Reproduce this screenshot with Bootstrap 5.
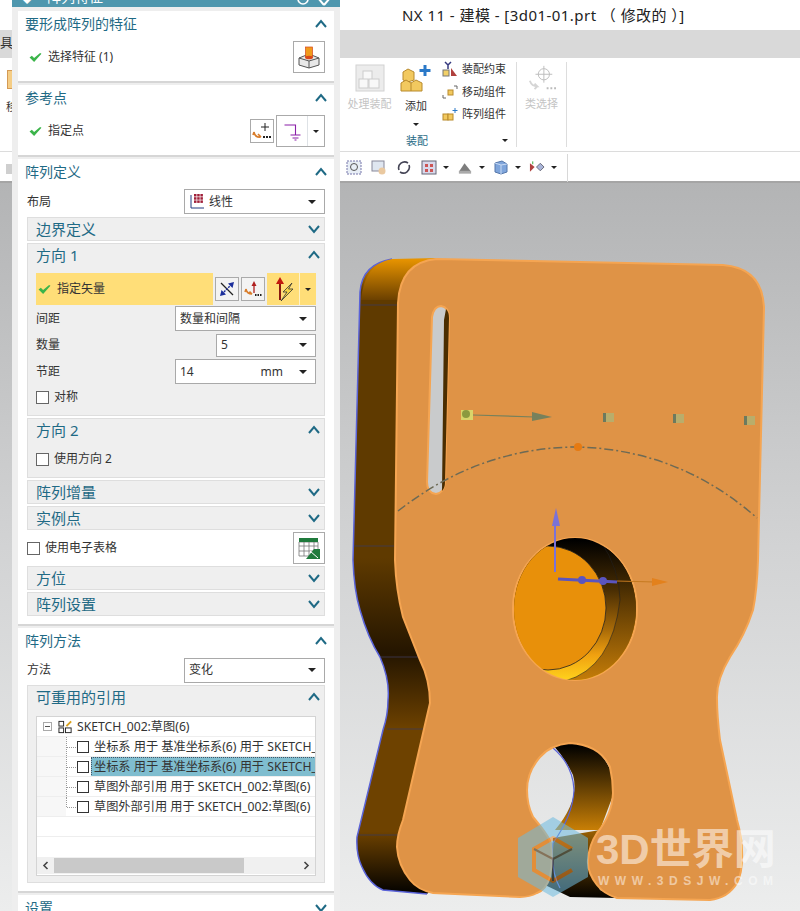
<!DOCTYPE html>
<html lang="zh">
<head>
  <meta charset="UTF-8" />
  <title>NX 11 - 建模</title>
  <link href="https://cdn.jsdelivr.net/npm/bootstrap@5.3.3/dist/css/bootstrap.min.css" rel="stylesheet">
  <style>
    html, body { height: 911px; overflow: hidden; }
    body { font-family: "Noto Sans", "Noto Sans CJK SC", sans-serif; font-size: 12px; color: #333; background: #fff; }

    /* application behind the dialog */
    .app-wrap { width: 800px; height: 911px; }
    .title-row { height: 30px; padding-left: 402px; font-size: 15px; letter-spacing: .45px; color: #222; line-height: 30px; white-space: nowrap; }
    .tab-row { height: 28px; background: #d9d9d9; }
    .ribbon-row { height: 94px; padding-left: 343px; border-bottom: 1px solid #dcdcdc; font-size: 11px; line-height: 16px; }
    .tool-row { height: 31px; padding: 2px 0 0 346px; background: #fff; border-bottom: 2px solid #a5a5a5; }
    .tool-row svg { flex: none; margin-right: 9px; }
    .tool-row svg.tb-drop { margin-right: 6px; }
    .tool-row .drop-mini { margin-right: 8px; }
    .tb-sep { width: 1px; height: 28px; background: #d8d8d8; margin-left: 2px; }
    .model-area { height: 728px; background: linear-gradient(#b3b4b5, #d2d3d4 50%, #eceded); }
    .model-area svg { display: block; }
    .rb-big { width: 53px; text-align: center; padding-top: 6px; }
    .rb-big svg { display: block; margin: 0 auto; }
    .rb-add { width: 40px; }
    .rb-off { color: #c4c4c4; }
    .rb-pick { width: 49px; }
    .rb-sep { width: 1px; background: #ddd; height: 85px; margin: 4px 0 0; flex: none; }
    .rb-rows { width: 70px; margin-left: 6px; margin-right: 4px; }
    .rb-line { height: 22.5px; line-height: 22px; white-space: nowrap; gap: 4px; }
    .rb-foot { margin-top: 7px; }
    .rb-cap { color: #1f6a85; margin-left: -36px; }
    .drop-mini { width: 0; height: 0; border-left: 3px solid transparent; border-right: 3px solid transparent; border-top: 3px solid #222; display: inline-block; }
    .stray-glyph { position: absolute; left: 0; top: 33px; font-size: 13px; line-height: 18px; }
    .stray-icon { position: absolute; left: 7px; top: 70px; width: 7px; height: 19px; background: #f5cd85; border: 1px solid #d49a55; }
    .stray-text { position: absolute; left: 6px; top: 99px; font-size: 11px; line-height: 16px; }
    .stray-tool { position: absolute; left: 6px; top: 164px; width: 8px; height: 10px; background: #cfcfcf; }

    /* floating dialog */
    .nx-dialog { position: absolute; left: 12px; top: 0; width: 328px; height: 911px; background: #eeeeee; overflow: hidden; }
    .nx-head { height: 7px; background: #4f97ae; margin-bottom: 4px; overflow: hidden; color: #fff; padding: 0 8px; }
    .nx-head-txt { font-size: 14px; line-height: 16px; margin-top: -11px; gap: 13px; }
    .nx-block { width: 316px; margin-left: 6px; background: #fff; border-bottom: 2px solid #d6d6d6; margin-bottom: 2px; }
    .nx-block-1 { height: 72px; }
    .nx-block-3 { height: 467px; }
    .nx-block-4 { height: 265px; }
    .nx-title { height: 27px; padding: 0 7px 2px; color: #1f6a85; font-size: 14px; line-height: 25px; }
    .nx-row { padding: 0 9px; }
    .nx-row-top { padding-top: 3px; }
    .tick-row { padding-left: 2px; gap: 6px; }
    .chk-row { gap: 5px; }
    .nx-sub { width: 298px; margin-left: 9px; background: #efefef; border: 1px solid #dedede; margin-bottom: 2px; }
    .nx-subhead { height: 22px; padding: 0 4px 0 8px; color: #1f6a85; font-size: 15px; line-height: 22px; }
    .nx-subhead-tall { height: 24px; padding-bottom: 2px; }
    .nx-label { font-size: 12px; color: #333; }
    .nx-field { height: 25px; background: #fff; border: 1px solid #a9a9a9; padding: 0 8px 0 4px; font-size: 12px; color: #333; }
    .nx-caret { width: 0; height: 0; border-left: 4px solid transparent; border-right: 4px solid transparent; border-top: 4px solid #222; flex: none; }
    .nx-caret-sm { border-left-width: 3px; border-right-width: 3px; border-top-width: 3px; }
    .nx-iconbtn { background: #fff; border: 1px solid #aaa; flex: none; }
    .nx-check { width: 13px; height: 13px; border: 1px solid #666; background: #fff; flex: none; }
    .vec-row { height: 32px; margin: 5px 8px 0; }
    .vec-yellow { background: #ffde78; height: 32px; }
    .vec-left { width: 177px; padding-left: 2px; gap: 6px; }
    .vec-right { width: 49px; margin-left: 2px; }
    .vec-mini { width: 24px; height: 24px; background: #f3f3f3; border: 1px solid #aaa; margin-left: 2px; flex: none; }
    .vec-split { width: 1px; height: 32px; background: #fff2c8; }
    .nx-tree { width: 280px; height: 160px; margin: 6px 0 0 8px; background: #fff; border: 1px solid #d4d4d4; overflow: hidden; }
    .tree-line { height: 20px; line-height: 20px; font-size: 12.2px; white-space: nowrap; overflow: hidden; border-bottom: 1px solid #eee; color: #333; }
    .tree-line .nx-check { width: 12px; height: 12px; border-color: #333; margin-left: 1px; }
    .tree-expander { margin-left: 6px; flex: none; }
    .tree-nodeicon { margin-left: 6px; flex: none; }
    .tree-gutter { width: 29px; background: #f7f7f7; flex: none; align-self: stretch; }
    .tree-conn { width: 10px; flex: none; align-self: stretch; border-left: 1px dotted #999; position: relative; }
    .tree-conn::after { content: ""; position: absolute; left: 0; top: 10px; width: 100%; border-top: 1px dotted #999; }
    .tree-conn-end { align-self: flex-start; height: 10px; }
    .tree-on { background: #7fbdcf; flex: 1; margin-left: 2px; padding-left: 3px; outline: 1px dotted #456; outline-offset: -1px; }
    .tree-txt { padding-left: 5px; flex: 1; overflow: hidden; }
    .tree-spacer { height: 20px; }
    .tree-bar { height: 17px; background: #f0f0f0; }
    .tree-thumb { width: 190px; height: 15px; background: #c9c9c9; }
    .tree-arrow { width: 17px; flex: none; }
  </style>
</head>
<body>

<svg width="0" height="0" class="position-absolute">
  <symbol id="chev-up" viewBox="0 0 12 10"><path d="M1 8 L6 2 L11 8" fill="none" stroke="#1f6a85" stroke-width="2"/></symbol>
  <symbol id="chev-dn" viewBox="0 0 12 10"><path d="M1 2 L6 8 L11 2" fill="none" stroke="#1f6a85" stroke-width="2"/></symbol>
  <symbol id="tick" viewBox="0 0 14 12"><path d="M0.5 6 L3 4 L5.5 6.5 L12 1 L13.5 2 L5.5 11 Z" fill="#3bb44a"/></symbol>
</svg>

<div class="app-wrap">
  <div class="title-row">NX 11 - 建模 - [3d01-01.prt （ 修改的 ）]</div>
  <div class="tab-row"></div>

  <div class="ribbon-row d-flex">
    <div class="rb-big rb-off">
      <svg width="30" height="28" viewBox="0 0 30 28"><rect x="1" y="1" width="28" height="26" fill="#ececec" stroke="#d2d2d2"/><rect x="8" y="7" width="9" height="9" fill="#f8f8f8" stroke="#ccc"/><rect x="4" y="15" width="9" height="9" fill="#f8f8f8" stroke="#ccc"/><rect x="14" y="15" width="10" height="9" fill="#f8f8f8" stroke="#ccc"/></svg>
      <div class="mt-1">处理装配</div>
    </div>
    <div class="rb-big rb-add">
      <svg width="32" height="30" viewBox="0 0 32 30"><path d="M3 8 L8 5 L14 8 V16 L8 18 L3 16 Z" fill="#f2c95f" stroke="#b88a2d"/><path d="M1 19 L6 16 L11 19 L16 16 L22 19 V27 H1 Z M11 19 V27" fill="#f2c95f" stroke="#b88a2d"/><path d="M25 1 V12 M19.5 6.5 H30.5" stroke="#2a79c8" stroke-width="3"/></svg>
      <div class="mt-1">添加</div>
      <span class="drop-mini"></span>
    </div>
    <div class="rb-rows d-flex flex-column">
      <div class="rb-line d-flex align-items-center"><svg width="16" height="16" viewBox="0 0 16 16"><rect x="1" y="9" width="6" height="6" fill="#f2d067" stroke="#777"/><path d="M9 15 L15 15 L9 7 Z" fill="#b0413e"/><path d="M3 1 L6 4 L9 1 M6 4 V8" stroke="#35397f" stroke-width="1.5" fill="none"/></svg>装配约束</div>
      <div class="rb-line d-flex align-items-center"><svg width="16" height="16" viewBox="0 0 16 16"><rect x="6" y="6" width="5" height="5" fill="#f2c95f" stroke="#b88a2d"/><path d="M12 2 h3 v3 M1 11 v3 h3" stroke="#666" fill="none"/></svg>移动组件</div>
      <div class="rb-line d-flex align-items-center"><svg width="16" height="16" viewBox="0 0 16 16"><rect x="1" y="8" width="5" height="6" fill="#f2c95f" stroke="#b88a2d"/><rect x="6" y="8" width="5" height="6" fill="#f2c95f" stroke="#b88a2d"/><path d="M13 2 v5 M10.5 4.5 h5" stroke="#2a79c8"/></svg>阵列组件</div>
      <div class="rb-foot d-flex justify-content-between"><span class="rb-cap">装配</span><span class="drop-mini align-self-center me-1"></span></div>
    </div>
    <div class="rb-sep"></div>
    <div class="rb-big rb-off rb-pick">
      <svg width="30" height="28" viewBox="0 0 30 30"><circle cx="17" cy="11" r="6" fill="none" stroke="#bbb"/><path d="M17 2 V20 M8 11 H26" stroke="#bbb"/><path d="M2 18 q2 6 8 6 l-3 -3 m3 3 l-3 3" stroke="#d5d5d5" stroke-width="2" fill="none"/><path d="M20 26 h2 m2 0 h2 m2 0 h2" stroke="#bbb" stroke-width="2"/></svg>
      <div class="mt-1">类选择</div>
    </div>
    <div class="rb-sep"></div>
  </div>

  <div class="tool-row d-flex align-items-center">
    <svg width="16" height="15" viewBox="0 0 16 15"><rect x="1" y="1" width="14" height="13" fill="#e8eef6" stroke="#77a" stroke-dasharray="2 1"/><circle cx="8" cy="7" r="3.5" fill="none" stroke="#555"/></svg>
    <svg width="16" height="15" viewBox="0 0 16 15"><rect x="1" y="1" width="12" height="10" fill="#dfe6f0" stroke="#889"/><circle cx="11" cy="11" r="3.5" fill="#eac9a0"/></svg>
    <svg width="16" height="15" viewBox="0 0 16 15"><path d="M3 10 A6 6 0 0 1 12 3 M13 5 A6 6 0 0 1 4 12" fill="none" stroke="#445" stroke-width="1.6"/></svg>
    <svg class="tb-drop" width="16" height="15" viewBox="0 0 16 15"><rect x="1" y="1" width="14" height="13" fill="#d9d9ec" stroke="#667"/><rect x="4" y="4" width="3" height="3" fill="#c55"/><rect x="9" y="4" width="3" height="3" fill="#c55"/><rect x="4" y="9" width="3" height="3" fill="#c55"/><rect x="9" y="9" width="3" height="3" fill="#c55"/></svg>
    <span class="drop-mini"></span>
    <svg class="tb-drop" width="16" height="14" viewBox="0 0 17 14"><path d="M2 11 L8 2 L12 7 L15 11 Z" fill="#7d7d7d"/><rect x="2" y="10" width="13" height="3" fill="#aaa"/></svg>
    <span class="drop-mini"></span>
    <svg class="tb-drop" width="16" height="15" viewBox="0 0 16 15"><path d="M2 3 L9 1 L14 4 V12 L8 14 L2 12 Z" fill="#7fa5db" stroke="#5577aa"/><path d="M2 3 L8 5 L14 4 M8 5 V14" stroke="#c7d9f2" fill="none"/></svg>
    <span class="drop-mini"></span>
    <svg class="tb-drop" width="16" height="15" viewBox="0 0 17 15"><path d="M8 7 L12 3 L16 7 L12 11 Z" fill="#a9b5d8" stroke="#667"/><path d="M1 3 L6 7 L1 12 Z" fill="#b0413e"/><path d="M4 1 v3" stroke="#3a3"/></svg>
    <span class="drop-mini"></span>
    <span class="tb-sep"></span>
  </div>

  <div class="model-area">
    <svg width="800" height="728" viewBox="0 183 800 728">
      <defs>
        <linearGradient id="sideTop" x1="0" y1="259" x2="0" y2="300" gradientUnits="userSpaceOnUse"><stop offset="0" stop-color="#e89400"/><stop offset="1" stop-color="#6b4000"/></linearGradient>
        <linearGradient id="sideFill" x1="0" y1="259" x2="0" y2="895" gradientUnits="userSpaceOnUse">
          <stop offset="0" stop-color="#e89400"/><stop offset=".05" stop-color="#5f3a00"/><stop offset=".47" stop-color="#5f3a00"/><stop offset=".62" stop-color="#241500"/><stop offset=".74" stop-color="#6e4200"/><stop offset=".9" stop-color="#6e4200"/><stop offset="1" stop-color="#000"/>
        </linearGradient>
        <linearGradient id="holeSide" x1="0" y1="745" x2="0" y2="830" gradientUnits="userSpaceOnUse"><stop offset="0" stop-color="#000"/><stop offset="1" stop-color="#c87f06"/></linearGradient>
        <linearGradient id="holeSide2" x1="0" y1="830" x2="0" y2="900" gradientUnits="userSpaceOnUse"><stop offset="0" stop-color="#9a6003"/><stop offset="1" stop-color="#000"/></linearGradient>
        <linearGradient id="boreGrad" x1="0" y1="540" x2="0" y2="680" gradientUnits="userSpaceOnUse"><stop offset="0" stop-color="#000"/><stop offset=".36" stop-color="#4a2e03"/><stop offset=".64" stop-color="#a86a08"/><stop offset=".82" stop-color="#f0a010"/><stop offset="1" stop-color="#ffd21c"/></linearGradient>
        <linearGradient id="boreLip" x1="0" y1="540" x2="0" y2="680" gradientUnits="userSpaceOnUse"><stop offset="0" stop-color="#000"/><stop offset=".43" stop-color="#5a3803"/><stop offset="1" stop-color="#c47c08"/></linearGradient>
        <clipPath id="boreClip"><ellipse cx="575" cy="609" rx="61" ry="71"/></clipPath>
      </defs>

      <!-- back side of the plate -->
      <path d="M392 259 Q362 264 360 292 L353 560 Q354 590 360 610 Q368 638 380 657 Q390 680 388 700 Q388 715 383 730 L357 837 Q356 855 362 867 Q370 885 383 890 L427 894 L440 880 L440 300 L437 259 Z" fill="url(#sideFill)"/>
      <path d="M392 259 Q362 264 360 292 L353 560 Q354 590 360 610 Q368 638 380 657 Q390 680 388 700 Q388 715 383 730 L357 837 Q356 855 362 867 Q370 885 383 890 L427 894" fill="none" stroke="#5a63d8" stroke-width="1.5"/>
      <path d="M392 259 L437 258 Q404 266 399 300 H361 Q364 264 392 259 Z" fill="url(#sideTop)"/>
      <path d="M361 305 H398 M354 546 H394 M380 657 H420 M387 729 H428 M358 835 H400" stroke="#3d3a55" stroke-width=".8"/>

      <!-- side walls seen through the lower cut-out -->
      <path d="M553 745 L570 742 Q610 745 615 790 L600 830 L555 830 Q580 800 573 775 Q565 758 553 745 Z" fill="url(#holeSide)"/>
      <path d="M553 838 L600 830 L588 860 L600 890 L617 898 L570 897 L545 885 L552 860 Z" fill="url(#holeSide2)"/>
      <path d="M553 748 Q573 765 574 790 Q573 815 553 843 Q550 870 560 888" fill="none" stroke="#5a63d8" stroke-width="1.2"/>

      <!-- front face -->
      <path fill="#df9346" stroke="#f5a552" stroke-width="2" d="M398 303 Q400 262 437 259 L723 265 Q762 268 764 307 L758 560 Q757 590 753 610 Q745 635 730 657 Q716 680 717 700 Q717 715 720 740 L737 820 Q742 838 742 850 Q743 872 737 883 Q728 898 710 900 L617 898 Q604 894 597 885 Q587 872 588 860 Q589 845 597 833 Q612 815 613 793 Q613 780 610 767 Q600 745 570 743 Q550 745 540 757 Q527 772 527 790 Q527 805 533 817 Q548 835 551 843 Q553 860 550 877 Q546 890 537 893 Q530 897 520 897 L433 893 Q418 890 410 880 Q398 865 397 847 Q397 835 403 820 L430 703 Q430 680 420 660 L403 617 Q396 590 395 560 Z"/>

      <!-- upper slot -->
      <path d="M432 317 Q434 306 441 306 Q449 307 449 318 L445 482 Q444 493 436 494 Q427 493 427 482 Z" fill="#c9cbcc" stroke="#f5a552" stroke-width="2"/>
      <path d="M446 309 Q449 312 449 318 L445 482 Q445 488 442 491 L444 320 Z" fill="#4a2d00"/>

      <!-- bore -->
      <ellipse cx="575" cy="609" rx="62" ry="71" fill="#e8900a" stroke="#f5a552" stroke-width="2"/>
      <g clip-path="url(#boreClip)">
        <rect x="510" y="535" width="130" height="150" fill="url(#boreGrad)"/>
        <path d="M565 681 Q612 668 620 600 Q620 570 600 540 L640 540 L640 681 Z" fill="url(#boreLip)"/>
        <path d="M565 681 Q612 668 620 600 Q620 570 600 540" fill="none" stroke="#222" stroke-width=".6"/>
        <ellipse cx="548" cy="608" rx="58" ry="62" fill="#e8900a" stroke="#222" stroke-width=".8"/>
      </g>

      <!-- dashed pattern curve -->
      <path d="M398 511 Q480 447 578 447 Q680 450 757 518" fill="none" stroke="#6d6a55" stroke-width="1.5" stroke-dasharray="9 3 2 3"/>
      <circle cx="578" cy="447" r="4" fill="#e67a12"/>

      <!-- pattern direction and preview points -->
      <rect x="461" y="410" width="12" height="10" fill="#d9d46a"/>
      <circle cx="466" cy="414" r="4" fill="#8c9a3e"/>
      <path d="M473 415 L535 417" stroke="#77815c" stroke-width="1.2"/>
      <path d="M532 412 L552 417 L532 421 Z" fill="#77815c"/>
      <g fill="#b9ad6b"><rect x="603" y="413" width="11" height="9"/><rect x="673" y="414" width="11" height="9"/><rect x="744" y="416" width="11" height="9"/></g>
      <g fill="#6d7a5e"><rect x="603" y="413" width="3" height="9"/><rect x="673" y="414" width="3" height="9"/><rect x="744" y="416" width="3" height="9"/></g>

      <!-- csys handles -->
      <path d="M555 572 V525" stroke="#7a72d8" stroke-width="2"/>
      <path d="M556 508 L552 526 L560 526 Z" fill="#7a72d8"/>
      <path d="M558 579 L617 582" stroke="#5b55bf" stroke-width="3"/>
      <circle cx="582" cy="580" r="4" fill="#5b55bf"/><circle cx="603" cy="581" r="4" fill="#5b55bf"/>
      <path d="M617 581 L655 582" stroke="#c67a20" stroke-width="1.2"/>
      <path d="M652 578 L668 582 L652 586 Z" fill="#e3811c"/>

      <!-- site watermark -->
      <g opacity=".55">
        <path d="M553 817 L588 838 V877 L553 897 L518 877 V838 Z" fill="#6dbbe0"/>
        <path d="M572 849 L553 838 L534 849 V870 L553 881 L572 870" fill="none" stroke="#e68a30" stroke-width="4"/>
        <path d="M553 859 L572 849 M553 859 V881 M553 859 L534 849" stroke="#3d5a6b" stroke-width="2"/>
      </g>
      <text x="596" y="864" font-family="'Liberation Sans','Noto Sans CJK SC',sans-serif" font-size="42" font-weight="700" fill="#fff" fill-opacity=".55">3D世界网</text>
      <text x="598" y="885" font-family="'Liberation Sans',sans-serif" font-size="12" font-weight="700" textLength="175" lengthAdjust="spacing" fill="#fff" fill-opacity=".5">WWW.3DSJW.COM</text>
    </svg>
  </div>
</div>

<!-- bits of the ribbon showing left of the dialog -->
<span class="stray-glyph">具</span>
<div class="stray-icon"></div>
<span class="stray-text">移</span>
<div class="stray-tool"></div>

<!-- pattern feature dialog -->
<div class="nx-dialog">
  <div class="nx-head d-flex justify-content-between">
    <div class="nx-head-txt d-flex"><span>◆</span><span>阵列特征</span></div>
    <svg width="36" height="7" viewBox="0 0 36 7"><circle cx="7" cy="-1" r="5" fill="none" stroke="#fff" stroke-width="1.6"/><path d="M22 -2 L28 5 M34 -2 L28 5" stroke="#fff" stroke-width="2"/></svg>
  </div>

  <div class="nx-block nx-block-1">
    <div class="nx-title d-flex justify-content-between align-items-center"><span>要形成阵列的特征</span><svg width="12" height="10"><use href="#chev-up"/></svg></div>
    <div class="nx-row nx-row-top d-flex justify-content-between align-items-center">
      <div class="tick-row d-flex align-items-center"><svg width="13" height="11"><use href="#tick"/></svg><span class="nx-label">选择特征 (1)</span></div>
      <div class="nx-iconbtn d-flex align-items-center justify-content-center" style="width:32px;height:32px">
        <svg width="24" height="24" viewBox="0 0 24 24"><path d="M2 13 L12 9 L22 13 V20 L12 23 L2 20 Z" fill="#e8e8e8" stroke="#555"/><path d="M2 13 L12 16 L22 13 M12 16 V23" fill="none" stroke="#555"/><rect x="8.5" y="2" width="7" height="10" fill="#f09a1c" stroke="#d8471c" stroke-width=".7"/><ellipse cx="12" cy="12.5" rx="4" ry="1.8" fill="#d8471c"/></svg>
      </div>
    </div>
  </div>

  <div class="nx-block nx-block-1">
    <div class="nx-title d-flex justify-content-between align-items-center"><span>参考点</span><svg width="12" height="10"><use href="#chev-up"/></svg></div>
    <div class="nx-row nx-row-top d-flex justify-content-between align-items-center">
      <div class="tick-row d-flex align-items-center"><svg width="13" height="11"><use href="#tick"/></svg><span class="nx-label">指定点</span></div>
      <div class="d-flex align-items-center" style="gap:2px">
        <div class="nx-iconbtn d-flex align-items-center justify-content-center" style="width:24px;height:24px">
          <svg width="20" height="20" viewBox="0 0 20 20"><path d="M13 2 V10 M9 6 H17" stroke="#222"/><path d="M2 11 Q3 17 9 16 M2 11 L1 14 M9 16 L6 13" stroke="#d87c2a" stroke-width="1.6" fill="none"/><path d="M11 16 h2 m1 0 h2 m1 0 h2" stroke="#222" stroke-width="2"/></svg>
        </div>
        <div class="nx-iconbtn d-flex" style="width:49px;height:32px">
          <div class="d-flex align-items-center justify-content-center" style="width:31px"><svg width="20" height="20" viewBox="0 0 20 20"><path d="M2.5 4 H13.5 V14 M8.5 14 H18.5 M10.5 17 H16.5 M12.5 19 H14.5" stroke="#8a1fa8" stroke-width="1.1" fill="none"/></svg></div>
          <div class="d-flex align-items-center justify-content-center border-start" style="width:17px"><span class="nx-caret nx-caret-sm"></span></div>
        </div>
      </div>
    </div>
  </div>

  <div class="nx-block nx-block-3">
    <div class="nx-title d-flex justify-content-between align-items-center"><span>阵列定义</span><svg width="12" height="10"><use href="#chev-up"/></svg></div>
    <div class="nx-row d-flex justify-content-between align-items-center" style="height:31px">
      <span class="nx-label">布局</span>
      <div class="nx-field d-flex justify-content-between align-items-center" style="width:141px">
        <span class="d-flex align-items-center gap-1"><svg width="16" height="16" viewBox="0 0 16 16"><path d="M2 1 V14 H15" stroke="#223a80" fill="none"/><g fill="#a0203a"><rect x="5" y="0" width="2.5" height="2.5"/><rect x="8.2" y="0" width="2.5" height="2.5"/><rect x="11.4" y="0" width="2.5" height="2.5"/><rect x="5" y="3.2" width="2.5" height="2.5"/><rect x="8.2" y="3.2" width="2.5" height="2.5"/><rect x="11.4" y="3.2" width="2.5" height="2.5"/><rect x="5" y="6.4" width="2.5" height="2.5"/><rect x="8.2" y="6.4" width="2.5" height="2.5"/><rect x="11.4" y="6.4" width="2.5" height="2.5"/></g></svg>线性</span>
        <span class="nx-caret"></span>
      </div>
    </div>

    <div class="nx-sub">
      <div class="nx-subhead d-flex justify-content-between align-items-center"><span>边界定义</span><svg width="12" height="10"><use href="#chev-dn"/></svg></div>
    </div>

    <div class="nx-sub" style="height:173px">
      <div class="nx-subhead nx-subhead-tall d-flex justify-content-between align-items-center"><span>方向 1</span><svg width="12" height="10"><use href="#chev-up"/></svg></div>
      <div class="vec-row d-flex align-items-center">
        <div class="vec-yellow vec-left d-flex align-items-center"><svg width="13" height="11"><use href="#tick"/></svg><span class="nx-label">指定矢量</span></div>
        <div class="vec-mini d-flex align-items-center justify-content-center"><svg width="18" height="18" viewBox="0 0 18 18"><path d="M3 3 L15 15" stroke="#222" stroke-width="1.2"/><path d="M6 12 L12 6" stroke="#1c2f9c" stroke-width="1.4" stroke-dasharray="2 1"/><path d="M16 2 L14.5 8 L10 3.5 Z M2 16 L3.5 10 L8 14.5 Z" fill="#1c2f9c"/></svg></div>
        <div class="vec-mini d-flex align-items-center justify-content-center"><svg width="18" height="18" viewBox="0 0 18 18"><path d="M10 4 V13" stroke="#b02020" stroke-width="1.3"/><path d="M10 1 L7.5 6 H12.5 Z" fill="#b02020"/><path d="M2 9 Q3 14 8 14 M2 9 L1 12 M8 14 L5.5 11.5" stroke="#d87c2a" stroke-width="1.5" fill="none"/><path d="M11 15 h1.5 m1 0 h1.5 m1 0 h1.5" stroke="#222" stroke-width="2"/></svg></div>
        <div class="vec-yellow vec-right d-flex align-items-center">
          <div class="d-flex align-items-center justify-content-center" style="width:32px"><svg width="22" height="26" viewBox="0 0 22 26"><path d="M8 24 V7" stroke="#8a1a10" stroke-width="2"/><path d="M8 1 L4 8 H12 Z" fill="#c2190f"/><path d="M20 7 L11 16 H15 L9 25 L21 13 H16.5 Z" fill="#f5d547" stroke="#333" stroke-width=".8"/></svg></div>
          <div class="vec-split"></div>
          <div class="d-flex align-items-center justify-content-center" style="width:16px"><span class="nx-caret nx-caret-sm"></span></div>
        </div>
      </div>
      <div class="d-flex justify-content-between align-items-center ps-2 pe-2" style="height:27px">
        <span class="nx-label">间距</span>
        <div class="nx-field d-flex justify-content-between align-items-center" style="width:141px">
          <span>数量和间隔</span><span class="nx-caret"></span>
        </div>
      </div>
      <div class="d-flex justify-content-between align-items-center ps-2 pe-2" style="height:26px">
        <span class="nx-label">数量</span>
        <div class="nx-field d-flex justify-content-between align-items-center" style="width:100px;height:23px">
          <span>5</span><span class="nx-caret"></span>
        </div>
      </div>
      <div class="d-flex justify-content-between align-items-center ps-2 pe-2" style="height:27px">
        <span class="nx-label">节距</span>
        <div class="nx-field d-flex align-items-center" style="width:141px">
          <span class="me-auto">14</span><span class="me-3">mm</span><span class="nx-caret"></span>
        </div>
      </div>
      <div class="chk-row d-flex align-items-center ps-2" style="height:24px"><span class="nx-check"></span><span class="nx-label">对称</span></div>
    </div>

    <div class="nx-sub" style="height:60px">
      <div class="nx-subhead nx-subhead-tall d-flex justify-content-between align-items-center"><span>方向 2</span><svg width="12" height="10"><use href="#chev-up"/></svg></div>
      <div class="chk-row d-flex align-items-center ps-2 pt-1" style="height:28px"><span class="nx-check"></span><span class="nx-label">使用方向 2</span></div>
    </div>

    <div class="nx-sub">
      <div class="nx-subhead d-flex justify-content-between align-items-center"><span>阵列增量</span><svg width="12" height="10"><use href="#chev-dn"/></svg></div>
    </div>
    <div class="nx-sub mb-0">
      <div class="nx-subhead d-flex justify-content-between align-items-center"><span>实例点</span><svg width="12" height="10"><use href="#chev-dn"/></svg></div>
    </div>

    <div class="nx-row d-flex justify-content-between align-items-center" style="height:36px">
      <div class="chk-row d-flex align-items-center"><span class="nx-check"></span><span class="nx-label">使用电子表格</span></div>
      <div class="nx-iconbtn d-flex align-items-center justify-content-center" style="width:32px;height:32px">
        <svg width="24" height="24" viewBox="0 0 24 24"><path d="M2 6 H21 V20 H2 Z M2 10 H21 M2 15 H21 M7 6 V20 M12 6 V20 M17 6 V20" fill="#fff" stroke="#777" stroke-width=".8"/><rect x="2" y="2" width="19" height="4" fill="#1f7a3c"/><path d="M9 23 L23 23 L23 13 L17 13 Z" fill="#1f7a3c"/><path d="M13 15 L21 22" stroke="#fff"/></svg>
      </div>
    </div>

    <div class="nx-sub">
      <div class="nx-subhead d-flex justify-content-between align-items-center"><span>方位</span><svg width="12" height="10"><use href="#chev-dn"/></svg></div>
    </div>
    <div class="nx-sub">
      <div class="nx-subhead d-flex justify-content-between align-items-center"><span>阵列设置</span><svg width="12" height="10"><use href="#chev-dn"/></svg></div>
    </div>
  </div>

  <div class="nx-block nx-block-4">
    <div class="nx-title d-flex justify-content-between align-items-center"><span>阵列方法</span><svg width="12" height="10"><use href="#chev-up"/></svg></div>
    <div class="nx-row d-flex justify-content-between align-items-center" style="height:30px">
      <span class="nx-label">方法</span>
      <div class="nx-field d-flex justify-content-between align-items-center" style="width:141px"><span>变化</span><span class="nx-caret"></span></div>
    </div>
    <div class="nx-sub" style="height:198px">
      <div class="nx-subhead nx-subhead-tall d-flex justify-content-between align-items-center"><span>可重用的引用</span><svg width="12" height="10"><use href="#chev-up"/></svg></div>
      <div class="nx-tree">
        <div class="tree-line d-flex align-items-center">
          <svg class="tree-expander" width="9" height="9" viewBox="0 0 9 9"><rect x=".5" y=".5" width="8" height="8" fill="#fff" stroke="#aaa"/><path d="M2 4.5 H7" stroke="#555"/></svg>
          <svg class="tree-nodeicon" width="15" height="14" viewBox="0 0 16 14"><rect x="1" y="1" width="5" height="5" fill="#fff" stroke="#222"/><rect x="1" y="8" width="5" height="5" fill="#fff" stroke="#222"/><rect x="8" y="8" width="6" height="5" fill="#fff" stroke="#222"/><path d="M9 6 L14 1" stroke="#d9a21c" stroke-width="2"/></svg>
          <span class="ms-1">SKETCH_002:草图(6)</span>
        </div>
        <div class="tree-line d-flex align-items-center"><span class="tree-gutter"></span><span class="tree-conn"></span><span class="nx-check"></span><span class="tree-txt">坐标系 用于 基准坐标系(6) 用于 SKETCH_002:草图(6)</span></div>
        <div class="tree-line d-flex align-items-center"><span class="tree-gutter"></span><span class="tree-conn"></span><span class="nx-check"></span><span class="tree-on">坐标系 用于 基准坐标系(6) 用于 SKETCH_002:草图(6)</span></div>
        <div class="tree-line d-flex align-items-center"><span class="tree-gutter"></span><span class="tree-conn"></span><span class="nx-check"></span><span class="tree-txt">草图外部引用 用于 SKETCH_002:草图(6)</span></div>
        <div class="tree-line d-flex align-items-center"><span class="tree-gutter"></span><span class="tree-conn tree-conn-end"></span><span class="nx-check"></span><span class="tree-txt">草图外部引用 用于 SKETCH_002:草图(6)</span></div>
        <div class="tree-line"></div>
        <div class="tree-spacer"></div>
        <div class="tree-bar d-flex align-items-center">
          <span class="tree-arrow d-flex justify-content-center"><svg width="7" height="9" viewBox="0 0 7 9"><path d="M5.5 1 L2 4.5 L5.5 8" fill="none" stroke="#444" stroke-width="1.6"/></svg></span>
          <span class="tree-thumb"></span>
          <span class="tree-arrow ms-auto d-flex justify-content-center"><svg width="7" height="9" viewBox="0 0 7 9"><path d="M1.5 1 L5 4.5 L1.5 8" fill="none" stroke="#444" stroke-width="1.6"/></svg></span>
        </div>
      </div>
    </div>
  </div>

  <div class="nx-block border-0">
    <div class="nx-title d-flex justify-content-between align-items-center"><span>设置</span><svg width="12" height="10"><use href="#chev-dn"/></svg></div>
  </div>
</div>

<script src="https://cdn.jsdelivr.net/npm/bootstrap@5.3.3/dist/js/bootstrap.bundle.min.js"></script>
</body>
</html>
